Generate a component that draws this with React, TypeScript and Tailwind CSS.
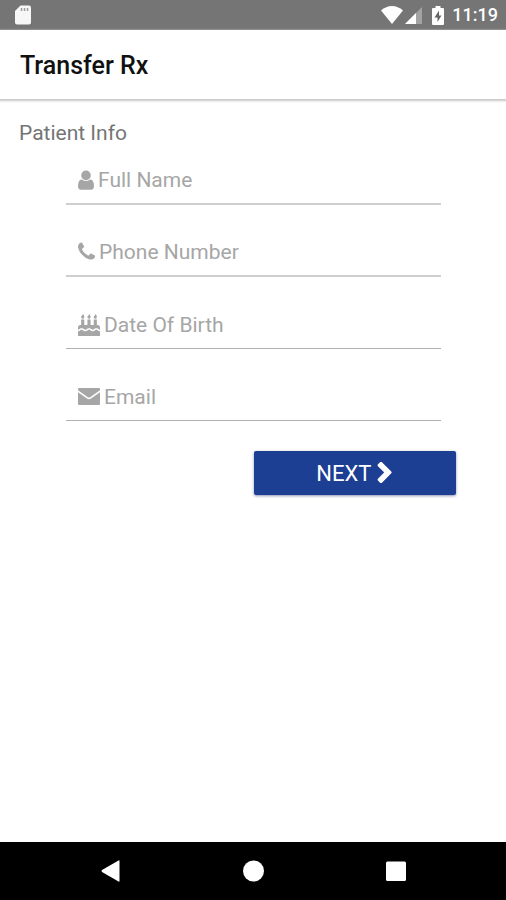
import React from 'react'
import clsx from 'clsx'

interface GlyphProps {
  viewBox: string
  path: string
  className?: string
}

function Glyph({ viewBox, path, className }: GlyphProps) {
  return (
    <svg viewBox={viewBox} className={clsx('shrink-0', className)} fill="currentColor" aria-hidden="true">
      <path d={path} />
    </svg>
  )
}

const USER =
  'M1536 1399q0 109-62.5 187t-150.5 78h-854q-88 0-150.5-78t-62.5-187q0-85 8.5-160.5t31.5-152 58.5-131 94-89 134.5-34.500q131 128 313 128t313-128q76 0 134.500 34.500t94 89 58.500 131 31.500 152 8.500 160.500zm-256-887q0 159-112.500 271.500t-271.500 112.500-271.500-112.500-112.500-271.500 112.500-271.500 271.500-112.500 271.500 112.500 112.500 271.500z'

const PHONE =
  'M1600 1240q0 27-10 70.500t-21 68.500q-21 50-122 106-94 51-186 51-27 0-52.500-3.500t-57.500-12.500-47.500-14.500-55.500-20.500-49-18q-98-35-175-83-128-79-264.500-215.500t-215.500-264.500q-48-77-83-175-3-9-18-49t-20.500-55.500-14.500-47.500-12.500-57.500-3.500-52.500q0-92 51-186 56-101 106-122 25-11 68.500-21t70.500-10q14 0 21 3 18 6 53 76 11 19 30 54t35 63.500 31 53.500q3 4 17.500 25t21.500 35.500 7 28.500q0 20-28.500 50t-62 55-62 53-28.500 46q0 9 5 22.500t8.500 20.500 14 24 11.500 19q76 137 174 235t235 174q2 1 19 11.500t24 14 20.500 8.500 22.500 5q18 0 46-28.500t53-62 55-62 50-28.500q14 0 28.500 7t35.500 21.500 25 17.500q25 15 53.500 31t63.500 35 54 30q70 35 76 53 3 7 3 21z'

const CAKE =
  'M1792 1408v384h-1792v-384q45 0 85-14t59-27.500 47-37.500q30-27 51.500-38t56.500-11q24 0 44 7t31 15 33 27q29 25 47 38t58 27 86 14q45 0 85-14.500t58-27 48-37.500q21-19 32.500-27t31-15 43.500-7q35 0 56.500 11t51.500 38q28 24 47 37.500t59 27.500 85 14 85-14 59-27.500 47-37.500q30-27 51.500-38t56.500-11q34 0 55.500 11t51.500 38q28 24 47 37.500t59 27.500 85 14zm0-320v192q-24 0-44-7t-31-15-33-27q-29-25-47-38t-58-27-85-14q-46 0-86 14t-58 27-47 38q-22 19-33 27t-31 15-44 7q-35 0-56.500-11t-51.500-38q-29-25-47-38t-58-27-86-14q-45 0-85 14.500t-58 27-48 37.500q-21 19-32.500 27t-31 15-43.500 7q-35 0-56.500-11t-51.500-38q-28-24-47-37.500t-59-27.500-85-14q-46 0-86 14t-58 27-47 38q-22 19-33 27t-31 15-44 7v-192q0-80 56-136t136-56h64v-448h256v448h256v-448h256v448h256v-448h256v448h64q80 0 136 56t56 136zM512 224q0 77-36 118.500t-92 41.500q-53 0-90.500-37.500t-37.500-90.500q0-29 9.500-51t23.500-34 31-28 31-31.500 23.500-44.500 9.500-67q38 0 83 74t45 150zM1024 224q0 77-36 118.500t-92 41.500q-53 0-90.500-37.500t-37.500-90.500q0-29 9.500-51t23.500-34 31-28 31-31.500 23.500-44.500 9.500-67q38 0 83 74t45 150zM1536 224q0 77-36 118.500t-92 41.500q-53 0-90.500-37.500t-37.500-90.500q0-29 9.500-51t23.500-34 31-28 31-31.500 23.500-44.500 9.500-67q38 0 83 74t45 150z'

const ENVELOPE =
  'M1 2h20q1 0 1 1v1.200L12.500 11q-1.500 1-3 0L0 4.200V3q0-1 1-1zM0 6.200 9 12.600q2 1.300 4 0L22 6.200V18q0 1-1 1H1q-1 0-1-1z'

const CHEVRON =
  'M1363 877l-742 742q-19 19-45 19t-45-19l-166-166q-19-19-19-45t19-45l531-531-531-531q-19-19-19-45t19-45l166-166q19-19 45-19t45 19l742 742q19 19 19 45t-19 45z'

const FIELDS = [
  { id: 'name', label: 'Full Name', type: 'text', icon: USER, viewBox: '256 0 1280 1792', size: 'w-4' },
  { id: 'phone', label: 'Phone Number', type: 'tel', icon: PHONE, viewBox: '192 0 1408 1792', size: 'w-[17px]' },
  { id: 'dob', label: 'Date Of Birth', type: 'text', icon: CAKE, viewBox: '0 0 1792 1792', size: 'w-[22px]' },
  { id: 'email', label: 'Email', type: 'email', icon: ENVELOPE, viewBox: '0 0 22 22', size: 'w-[22px]' },
]

function StatusBar() {
  return (
    <div className="flex h-[30px] items-center justify-between bg-[#757575] pr-2 pl-[15px] text-white">
      <svg viewBox="0 0 16 20" className="h-5 w-4" aria-hidden="true">
        <path d="M5.500.500H14a2 2 0 0 1 2 2v15a2 2 0 0 1-2 2H2a2 2 0 0 1-2-2V6z" fill="#f7f7f7" />
        <path d="M6.500 3v3M9.500 3v3M12.500 3v3" stroke="#9a9a9a" strokeWidth="1.500" />
      </svg>
      <div className="flex items-center">
        <svg viewBox="0 0 22 18" className="h-[18px] w-[22px]" aria-hidden="true">
          <path d="M11 18 0 4.500Q5 0 11 0t11 4.500z" fill="#fff" />
        </svg>
        <svg viewBox="0 0 17 17" className="ml-0.5 h-[17px] w-[17px]" aria-hidden="true">
          <path d="M17 0v17H0z" fill="#a3a3a3" />
          <path d="M11 6v11H0z" fill="#fff" />
        </svg>
        <svg viewBox="0 0 12 19" className="ml-2.5 h-[19px] w-3" aria-hidden="true">
          <path d="M3.500 0h5v2H11a1 1 0 0 1 1 1v15a1 1 0 0 1-1 1H1a1 1 0 0 1-1-1V3a1 1 0 0 1 1-1h2.500z" fill="#fff" />
          <path d="M7 4.500 2.500 11.500H5.500V16L9.500 9.500H7z" fill="#666" />
        </svg>
        <span className="ml-2 text-lg leading-none font-medium">11:19</span>
      </div>
    </div>
  )
}

function NavBar() {
  return (
    <nav className="flex h-[58px] items-center justify-center gap-[121px] bg-black text-white">
      <button type="button" aria-label="Back">
        <svg viewBox="0 0 22 22" className="h-[22px] w-[22px]" fill="currentColor" aria-hidden="true">
          <path d="M20.500 1v20q0 1-1 .500L3 12q-1-1 0-2L19.500.500q1-.500 1 .500z" />
        </svg>
      </button>
      <button type="button" aria-label="Home">
        <svg viewBox="0 0 22 22" className="h-[22px] w-[22px]" fill="currentColor" aria-hidden="true">
          <circle cx="11.500" cy="11" r="10.500" />
        </svg>
      </button>
      <button type="button" aria-label="Recent apps">
        <svg viewBox="0 0 22 22" className="h-[22px] w-[22px]" fill="currentColor" aria-hidden="true">
          <rect x="1" y="1.500" width="20" height="19.500" rx="1.500" />
        </svg>
      </button>
    </nav>
  )
}

export default function App() {
  return (
    <div className="flex min-h-screen flex-col bg-white font-[Roboto,sans-serif]">
      <StatusBar />
      <header className="flex h-[69px] items-center px-5 pt-0.5 shadow-[0_1px_2px_1px_#c8c8c8]">
        <h1 className="text-[25px] font-medium text-[#111]">Transfer Rx</h1>
      </header>
      <main className="flex-1">
        <form>
          <h2 className="px-[19px] pt-5 text-[21px] leading-7 text-[#757575]">Patient Info</h2>
          <div className="mt-2.5 mr-[65px] ml-[66px] flex flex-col gap-6">
            {FIELDS.map((f, i) => (
              <div
                key={f.id}
                className={clsx(
                  'flex h-12 items-center gap-1 px-3 text-[#a6a6a6]',
                  i < 2 ? 'border-b-2 border-[#cfcfcf]' : 'border-b border-[#b0b0b0]',
                )}
              >
                <label htmlFor={f.id} aria-label={f.label}>
                  <Glyph viewBox={f.viewBox} path={f.icon} className={f.size} />
                </label>
                <input
                  id={f.id}
                  type={f.type}
                  placeholder={f.label}
                  className="min-w-0 flex-1 text-[21px] leading-7 outline-none placeholder:text-[#a6a6a6]"
                />
              </div>
            ))}
          </div>
          <div className="mt-[30px] flex justify-end">
            <button
              type="button"
              className="mr-[50px] flex h-11 w-2/5 items-center justify-center gap-1.5 rounded-xs bg-[#1c3f94] text-[22px] text-white shadow-[0_1px_3px_#8a93b0]"
            >
              NEXT
              <Glyph viewBox="256 0 1280 1792" path={CHEVRON} className="w-4 stroke-current stroke-[90px]" />
            </button>
          </div>
        </form>
      </main>
      <NavBar />
    </div>
  )
}
